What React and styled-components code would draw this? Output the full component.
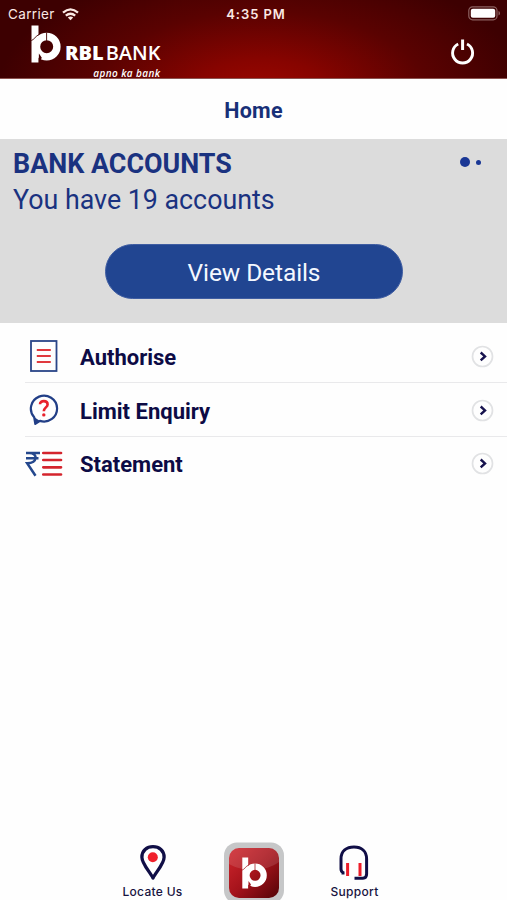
import styled, { createGlobalStyle } from 'styled-components'

const GlobalStyle = createGlobalStyle`
  * {
    box-sizing: border-box;
  }
  body {
    margin: 0;
    background: #fefefe;
    font-family: Roboto, sans-serif;
  }
`

const Screen = styled.div`
  display: flex;
  flex-direction: column;
  height: 900px;
  overflow: hidden;
`

const Header = styled.header`
  height: 79px;
  flex: none;
  background: radial-gradient(ellipse 265px 130px at 262px 92px, #9c0700 0%, #870400 25%, #5a0201 62%, #3d0001 100%);
  border-bottom: 1px solid #8c5350;
  color: #fff;
`

const StatusBar = styled.div`
  display: grid;
  grid-template-columns: 1fr auto 1fr;
  align-items: center;
  height: 25px;
  padding: 3px 6px 0 8px;
  font-family: Inter, sans-serif;
  font-size: 13.5px;
  color: #fbe9e4;
`

const Carrier = styled.div`
  display: flex;
  align-items: center;
  gap: 7px;
  letter-spacing: 0.35px;
`

const Time = styled.div`
  font-weight: 600;
  font-size: 13px;
  letter-spacing: 0.95px;
  padding-left: 3px;
`

const Battery = styled.svg`
  justify-self: end;
  margin-top: -2px;
`

const BrandBar = styled.div`
  display: flex;
  justify-content: space-between;
  align-items: flex-start;
  padding: 0 31px;
`

const Brand = styled.div`
  display: flex;
  gap: 4px;
`

const BrandText = styled.div`
  display: flex;
  flex-direction: column;
  align-items: flex-end;
  padding-top: 14px;
`

const BrandName = styled.div`
  font-family: 'Open Sans', sans-serif;
  font-size: 20px;
  line-height: 28px;
  font-weight: 600;
  letter-spacing: 0;
  b {
    font-weight: 800;
    margin-right: 2px;
  }
`

const Tagline = styled.div`
  margin-top: -1px;
  font-family: 'Open Sans', sans-serif;
  font-size: 10px;
  line-height: 14px;
  font-weight: 600;
  font-style: italic;
  letter-spacing: 0.4px;
`

const Power = styled.svg`
  margin-top: 13px;
`

const TitleBar = styled.div`
  height: 60px;
  flex: none;
  padding-top: 3px;
  display: flex;
  align-items: center;
  justify-content: center;
  font-size: 21.5px;
  font-weight: 700;
  letter-spacing: 0.25px;
  color: #183078;
`

const Accounts = styled.section`
  height: 184px;
  flex: none;
  padding: 9px 14px 0 13px;
  background: #dcdcdc;
  color: #1a3280;
`

const AccountsHead = styled.div`
  display: flex;
  justify-content: space-between;
  align-items: flex-start;
`

const AccountsTitle = styled.h2`
  margin: 0;
  font-size: 26.9px;
  line-height: 32px;
  font-weight: 700;
`

const AccountsText = styled.p`
  margin: 3px 0 0;
  font-size: 26.8px;
  line-height: 34px;
`

const Dots = styled.div`
  display: flex;
  align-items: center;
  gap: 6px;
  margin: 9px 12px 0 0;
`

const Dot = styled.span`
  width: ${(p) => p.$size}px;
  height: ${(p) => p.$size}px;
  border-radius: 50%;
  background: #1a3795;
`

const ViewButton = styled.button`
  display: block;
  width: 298px;
  height: 55px;
  margin: 27px 0 0 92px;
  padding: 2px 0 0;
  border: 1px solid #3f5da2;
  border-radius: 28px;
  background: #214591;
  color: #f4f8ff;
  font-family: Roboto, sans-serif;
  font-size: 24.5px;
  letter-spacing: -0.1px;
`

const List = styled.ul`
  list-style: none;
  margin: 0;
  padding: 6px 0 0 25px;
  flex: 1;
`

const Row = styled.li`
  display: flex;
  align-items: center;
  height: ${(p) => (p.$last ? 52 : 54)}px;
  padding: 1px 13px 0 0;
  border-bottom: ${(p) => (p.$last ? 'none' : '1px solid #e9e9eb')};
`

const RowIcon = styled.span`
  display: flex;
  width: 38px;
  justify-content: center;
`

const RowLabel = styled.span`
  flex: 1;
  padding: 2px 0 0 17px;
  font-size: 22px;
  font-weight: 700;
  color: #0d0b45;
`

const TabBar = styled.nav`
  display: grid;
  grid-template-columns: 101px 101px 101px;
  justify-content: center;
  height: 60px;
  flex: none;
`

const Tab = styled.div`
  display: flex;
  flex-direction: column;
  align-items: center;
  padding-top: ${(p) => p.$top}px;
`

const TabLabel = styled.span`
  margin-top: 2px;
  font-family: Inter, sans-serif;
  font-size: 12px;
  line-height: 17px;
  font-weight: 500;
  letter-spacing: 0.3px;
  white-space: nowrap;
  color: #17133f;
`

const LogoMark = ({ width, height, seam }) => (
  <svg width={width} height={height} viewBox="0 0 30 38" fill="none">
    <path d="M0.5 0.5H7.5V37.5H0.5Z" fill="#fff" />
    <circle cx="15.7" cy="21.7" r="10.2" stroke="#fff" strokeWidth="7.4" />
    <path d="M0.3 15.6C3 14.8 4.6 10.9 8.4 9.3" stroke={seam} strokeWidth="0.9" />
    <path d="M15.6 7.6V15.8" stroke={seam} strokeWidth="0.9" />
    <path d="M7.9 38V28.5L10.8 32.8Z" fill={seam} />
  </svg>
)

const DocumentIcon = () => (
  <svg width="28" height="32" viewBox="0 0 28 32" fill="none">
    <rect x="1" y="1" width="25.5" height="30" stroke="#2a4588" strokeWidth="1.8" />
    <path d="M6.8 10H20.8M6.8 16H20.8M6.8 22H20.8" stroke="#e0393e" strokeWidth="2" />
  </svg>
)

const QuestionIcon = () => (
  <svg width="30" height="32" viewBox="0 0 30 32" fill="none">
    <path
      d="M5.2 23.2A13.1 12.9 0 1 1 11 26.9L6.3 29.8Z"
      stroke="#223f87"
      strokeWidth="2.2"
      strokeLinejoin="round"
    />
    <path d="M5 23L11 27L6.3 30.4Z" fill="#223f87" />
    <path d="M11 10.3C11 6 18.6 6 18.6 10.4C18.6 13.4 14.8 13.4 14.8 17.3" stroke="#e8222c" strokeWidth="2.6" />
    <circle cx="14.8" cy="20.9" r="1.7" fill="#e8222c" />
  </svg>
)

const StatementIcon = () => (
  <svg width="38" height="26" viewBox="0 0 38 26" fill="none">
    <path d="M1 2H15M1 7.2H13.5M4.5 2C13 2 13 12.3 2.2 12.3L10.5 24.7" stroke="#24488d" strokeWidth="2.5" />
    <path d="M18.3 2H36M18.3 9H36M18.3 16.3H36M18.3 23.5H36" stroke="#d4242d" strokeWidth="2.7" strokeLinecap="round" />
  </svg>
)

const ArrowIcon = () => (
  <svg width="23" height="23" viewBox="0 0 23 23" fill="none">
    <circle cx="11.5" cy="11.5" r="10" stroke="#e1e2e4" strokeWidth="1.7" />
    <path d="M9.7 7.5L14 11.4L9.7 15.3" stroke="#17134e" strokeWidth="2.4" />
  </svg>
)

const PinIcon = () => (
  <svg width="28" height="37" viewBox="0 0 28 37" fill="none">
    <path
      d="M14 34C11.5 28.5 2.9 20 2.9 13.2C2.9 6.8 7.7 2.7 14 2.7S25.1 6.8 25.1 13.2C25.1 20 16.5 28.5 14 34Z"
      stroke="#100e46"
      strokeWidth="3.3"
      strokeLinejoin="round"
    />
    <circle cx="13.8" cy="13.2" r="5" fill="#f0202b" />
  </svg>
)

const HeadsetIcon = () => (
  <svg width="32" height="37" viewBox="0 0 32 37" fill="none">
    <path
      d="M4 30.5V28.5Q2 27.5 2 25V15C2 7 7.5 3 15 3S27.6 7 27.6 15V30Q27.6 34.2 24 34.2H15.5"
      stroke="#100e46"
      strokeWidth="3"
    />
    <path d="M8.6 19V32M21 19V32" stroke="#ed1d29" strokeWidth="3" />
  </svg>
)

const AppIcon = () => (
  <svg width="60" height="59" viewBox="0 0 60 59" fill="none">
    <defs>
      <linearGradient id="appRed" x1="0" y1="0" x2="1" y2="1">
        <stop offset="0" stopColor="#d0262d" />
        <stop offset="0.5" stopColor="#a5131b" />
        <stop offset="1" stopColor="#540407" />
      </linearGradient>
    </defs>
    <rect x="0" y="0.5" width="60" height="61" rx="13" fill="#c6c7c8" />
    <rect x="5" y="6" width="50" height="50" rx="10" fill="url(#appRed)" />
    <path d="M5 22V17Q5 6 16 6H44Q55 6 55 17V20C42 30 18 30 5 22Z" fill="#fff" opacity="0.12" />
    <svg x="17.5" y="15">
      <LogoMark width={26} height={32} seam="#a2161d" />
    </svg>
  </svg>
)

const rows = [
  { label: 'Authorise', Icon: DocumentIcon },
  { label: 'Limit Enquiry', Icon: QuestionIcon },
  { label: 'Statement', Icon: StatementIcon },
]

const App = () => {
  return (
    <>
      <GlobalStyle />
      <Screen>
        <Header>
          <StatusBar>
            <Carrier>
              Carrier
              <svg width="17" height="13" viewBox="0 0 17 13" fill="none" stroke="#fbe9e4" strokeWidth="2.3">
                <path d="M1 4.6Q8.5 -1.8 16 4.6" />
                <path d="M3.8 7.7Q8.5 3.8 13.2 7.7" />
                <path d="M5.8 9.5Q8.5 7.5 11.2 9.5L8.5 12.2Z" fill="#fbe9e4" stroke="none" />
              </svg>
            </Carrier>
            <Time>4:35 PM</Time>
            <Battery width="33" height="15" viewBox="0 0 33 15" fill="none">
              <rect x="0.8" y="0.8" width="28.2" height="13" rx="3.8" stroke="#8c6060" strokeWidth="1.2" />
              <rect x="2.8" y="2.8" width="24.4" height="9" rx="2" fill="#fff" />
              <path d="M30.5 5V9.6Q32 9 32 7.3T30.5 5Z" fill="#8c6060" />
            </Battery>
          </StatusBar>
          <BrandBar>
            <Brand>
              <LogoMark width={30} height={38} seam="#420001" />
              <BrandText>
                <BrandName>
                  <b>RBL</b>BANK
                </BrandName>
                <Tagline>apno ka bank</Tagline>
              </BrandText>
            </Brand>
            <Power width="26" height="28" viewBox="0 0 26 28" fill="none" stroke="#fff" strokeWidth="2.9">
              <path d="M8.2 6A10 10 0 1 0 17 6" />
              <path d="M12.6 1.5V12" strokeWidth="3" />
            </Power>
          </BrandBar>
        </Header>
        <TitleBar>Home</TitleBar>
        <Accounts>
          <AccountsHead>
            <AccountsTitle>BANK ACCOUNTS</AccountsTitle>
            <Dots>
              <Dot $size={10} />
              <Dot $size={5} />
            </Dots>
          </AccountsHead>
          <AccountsText>You have 19 accounts</AccountsText>
          <ViewButton>View Details</ViewButton>
        </Accounts>
        <List>
          {rows.map(({ label, Icon }, i) => (
            <Row key={label} $last={i === rows.length - 1}>
              <RowIcon>
                <Icon />
              </RowIcon>
              <RowLabel>{label}</RowLabel>
              <ArrowIcon />
            </Row>
          ))}
        </List>
        <TabBar>
          <Tab $top={4}>
            <PinIcon />
            <TabLabel>Locate Us</TabLabel>
          </Tab>
          <Tab $top={2}>
            <AppIcon />
          </Tab>
          <Tab $top={4}>
            <HeadsetIcon />
            <TabLabel>Support</TabLabel>
          </Tab>
        </TabBar>
      </Screen>
    </>
  )
}

export default App
